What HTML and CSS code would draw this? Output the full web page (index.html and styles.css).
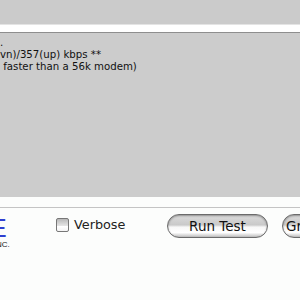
FILE: index.html
```html
<!DOCTYPE html>
<html lang="en">
<head>
    <meta charset="UTF-8">
    <title>Speed Test</title>
    <link rel="stylesheet" href="styles.css">
</head>
<body>
    <div id="window">
        <div class="toolbar"></div>
        <div class="rule"></div>
        <div class="output">
            <div class="line">.</div>
            <div class="line">vn)/357(up) kbps **</div>
            <div class="line"> faster than a 56k modem)</div>
        </div>
        <div class="gap"></div>
        <div class="controls">
            <div class="logo">
                <span class="logo-mark">E</span>
                <span class="logo-inc">NC.</span>
            </div>
            <label class="verbose">
                <span class="checkbox"></span>
                <span>Verbose</span>
            </label>
            <button class="pill run">Run Test</button>
            <button class="pill next">Graph</button>
        </div>
    </div>
</body>
</html>
```
FILE: styles.css
```css
body {
    margin: 0;
    font-family: "DejaVu Sans", sans-serif;
    background: #fcfdfc;
}
#window {
    width: 300px;
    height: 300px;
    overflow: hidden;
}
.toolbar {
    height: 24px;
    background: #cbcbcb;
}
.rule {
    height: 7px;
    background: #fff;
    border-top: 1px solid #e4e4e4;
    border-bottom: 1px solid #8e8e8e;
}
.output {
    height: 160px;
    padding-top: 4px;
    background: #cccccc;
    color: #111;
    font-size: 10.2px;
    line-height: 12px;
}
.line {
    white-space: pre;
}
.gap {
    height: 10px;
    border-bottom: 1px solid #c4c4c4;
}
.controls {
    display: flex;
    align-items: flex-start;
    padding-top: 6px;
}
.controls > * {
    flex-shrink: 0;
}
.logo {
    width: 56px;
    display: flex;
    flex-direction: column;
    overflow: hidden;
}
.logo-mark {
    margin-left: -10px;
    margin-top: 3px;
    font-family: "Liberation Sans", sans-serif;
    font-size: 25px;
    line-height: 22px;
    color: #2f3fd0;
}
.logo-inc {
    margin-left: -4px;
    margin-top: 1px;
    font-family: "Liberation Sans", sans-serif;
    font-size: 8px;
    color: #222;
}
.verbose {
    display: flex;
    align-items: center;
    gap: 5px;
    width: 111px;
    margin-top: 3px;
    font-size: 12.8px;
    color: #222;
}
.checkbox {
    width: 11px;
    height: 12px;
    border: 1px solid #777;
    border-radius: 2px;
    background: linear-gradient(#b8b8b8, #e4e4e4 55%, #fff 60%, #f4f4f4);
}
.pill {
    height: 24px;
    padding: 0;
    border: 1px solid #6b6b6b;
    border-radius: 12px;
    background: linear-gradient(#dcdcdc, #c9c9c9 45%, #f8f8f8 55%, #fff 80%, #bdbdbd);
    box-shadow: inset 0 1px 2px rgba(0, 0, 0, 0.35);
    font-family: "DejaVu Sans", sans-serif;
    font-size: 13.5px;
    color: #111;
}
.run {
    width: 101px;
}
.next {
    width: 70px;
    margin-left: 14px;
    text-align: left;
    padding-left: 3px;
}
```
